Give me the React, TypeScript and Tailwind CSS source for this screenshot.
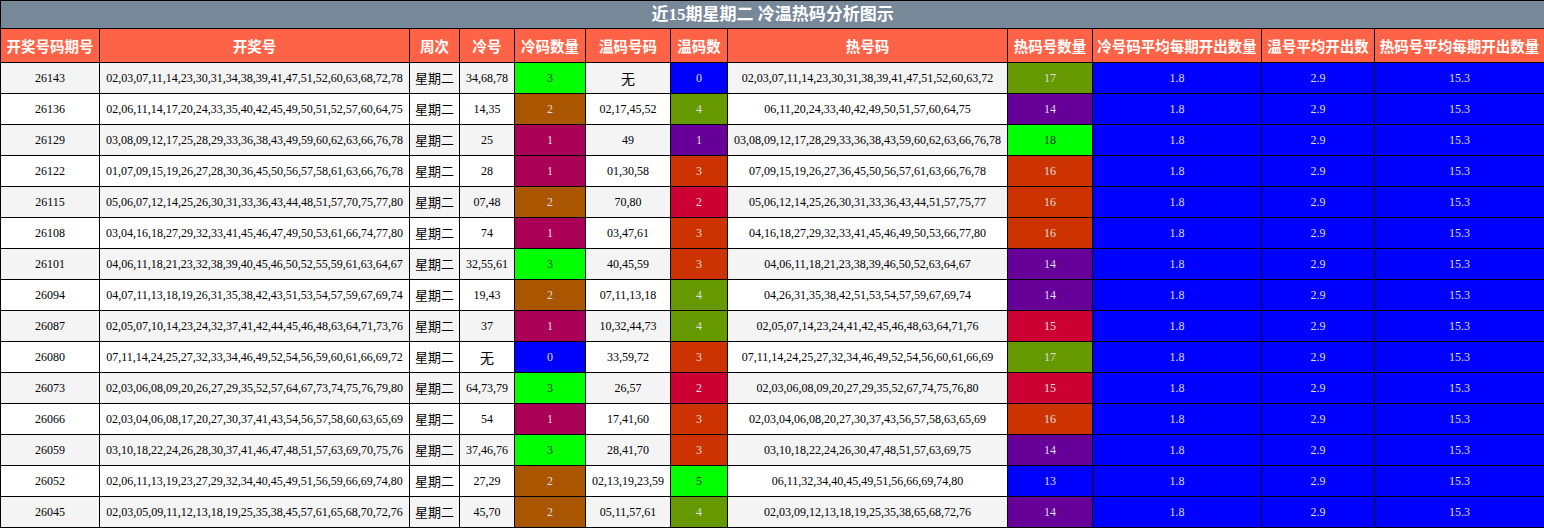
const rows: [string, string, string, number, string, number, string, number][] = [
  ["26143", "02,03,07,11,14,23,30,31,34,38,39,41,47,51,52,60,63,68,72,78", "34,68,78", 3, "无", 0, "02,03,07,11,14,23,30,31,38,39,41,47,51,52,60,63,72", 17],
  ["26136", "02,06,11,14,17,20,24,33,35,40,42,45,49,50,51,52,57,60,64,75", "14,35", 2, "02,17,45,52", 4, "06,11,20,24,33,40,42,49,50,51,57,60,64,75", 14],
  ["26129", "03,08,09,12,17,25,28,29,33,36,38,43,49,59,60,62,63,66,76,78", "25", 1, "49", 1, "03,08,09,12,17,28,29,33,36,38,43,59,60,62,63,66,76,78", 18],
  ["26122", "01,07,09,15,19,26,27,28,30,36,45,50,56,57,58,61,63,66,76,78", "28", 1, "01,30,58", 3, "07,09,15,19,26,27,36,45,50,56,57,61,63,66,76,78", 16],
  ["26115", "05,06,07,12,14,25,26,30,31,33,36,43,44,48,51,57,70,75,77,80", "07,48", 2, "70,80", 2, "05,06,12,14,25,26,30,31,33,36,43,44,51,57,75,77", 16],
  ["26108", "03,04,16,18,27,29,32,33,41,45,46,47,49,50,53,61,66,74,77,80", "74", 1, "03,47,61", 3, "04,16,18,27,29,32,33,41,45,46,49,50,53,66,77,80", 16],
  ["26101", "04,06,11,18,21,23,32,38,39,40,45,46,50,52,55,59,61,63,64,67", "32,55,61", 3, "40,45,59", 3, "04,06,11,18,21,23,38,39,46,50,52,63,64,67", 14],
  ["26094", "04,07,11,13,18,19,26,31,35,38,42,43,51,53,54,57,59,67,69,74", "19,43", 2, "07,11,13,18", 4, "04,26,31,35,38,42,51,53,54,57,59,67,69,74", 14],
  ["26087", "02,05,07,10,14,23,24,32,37,41,42,44,45,46,48,63,64,71,73,76", "37", 1, "10,32,44,73", 4, "02,05,07,14,23,24,41,42,45,46,48,63,64,71,76", 15],
  ["26080", "07,11,14,24,25,27,32,33,34,46,49,52,54,56,59,60,61,66,69,72", "无", 0, "33,59,72", 3, "07,11,14,24,25,27,32,34,46,49,52,54,56,60,61,66,69", 17],
  ["26073", "02,03,06,08,09,20,26,27,29,35,52,57,64,67,73,74,75,76,79,80", "64,73,79", 3, "26,57", 2, "02,03,06,08,09,20,27,29,35,52,67,74,75,76,80", 15],
  ["26066", "02,03,04,06,08,17,20,27,30,37,41,43,54,56,57,58,60,63,65,69", "54", 1, "17,41,60", 3, "02,03,04,06,08,20,27,30,37,43,56,57,58,63,65,69", 16],
  ["26059", "03,10,18,22,24,26,28,30,37,41,46,47,48,51,57,63,69,70,75,76", "37,46,76", 3, "28,41,70", 3, "03,10,18,22,24,26,30,47,48,51,57,63,69,75", 14],
  ["26052", "02,06,11,13,19,23,27,29,32,34,40,45,49,51,56,59,66,69,74,80", "27,29", 2, "02,13,19,23,59", 5, "06,11,32,34,40,45,49,51,56,66,69,74,80", 13],
  ["26045", "02,03,05,09,11,12,13,18,19,25,35,38,45,57,61,65,68,70,72,76", "45,70", 2, "05,11,57,61", 4, "02,03,09,12,13,18,19,25,35,38,65,68,72,76", 14],
]

const coldColor: Record<number, string> = {
  3: "bg-[#00ff00] text-[#333]",
  2: "bg-[#aa5500] text-[#ddd]",
  1: "bg-[#aa0055] text-[#ddd]",
  0: "bg-[#0000ff] text-[#ddd]",
}
const warmColor: Record<number, string> = {
  0: "bg-[#0000ff] text-[#ddd]",
  1: "bg-[#660099] text-[#ddd]",
  2: "bg-[#cc0033] text-[#ddd]",
  3: "bg-[#cc3300] text-[#ddd]",
  4: "bg-[#669900] text-[#ddd]",
  5: "bg-[#00ff00] text-[#333]",
}
const hotColor: Record<number, string> = {
  13: "bg-[#0000ff] text-[#ddd]",
  14: "bg-[#660099] text-[#ddd]",
  15: "bg-[#cc0033] text-[#ddd]",
  16: "bg-[#cc3300] text-[#ddd]",
  17: "bg-[#669900] text-[#ddd]",
  18: "bg-[#00ff00] text-[#333]",
}

const headers = ["开奖号码期号", "开奖号", "周次", "冷号", "冷码数量", "温码号码", "温码数", "热号码", "热码号数量", "冷号码平均每期开出数量", "温号平均开出数", "热码号平均每期开出数量"]
const widths = [99, 310, 50, 55, 71, 85, 57, 280, 85, 169, 113, 170]

const td = "border border-black text-center px-0"
const cjk = "font-[family-name:Noto_Sans_CJK_SC,sans-serif]"

export default function App() {
  return (
    <div className="w-[1544px] h-[528px] overflow-hidden bg-white">
      <table className="w-[1544px] table-fixed border-collapse text-[12px] font-[family-name:Liberation_Serif,Noto_Sans_CJK_SC,serif] text-black">
        <colgroup>
          {widths.map((w, i) => (
            <col key={i} style={{ width: w }} />
          ))}
        </colgroup>
        <thead>
          <tr className="h-[28px]">
            <th colSpan={12} className="border border-black bg-[#778899] text-white text-[17px] font-bold">
              近15期星期二 冷温热码分析图示
            </th>
          </tr>
          <tr className="h-[34px]">
            {headers.map((h) => (
              <th key={h} className={`border border-black bg-[#ff6347] text-white text-[14.5px] font-bold whitespace-nowrap ${cjk}`}>
                {h}
              </th>
            ))}
          </tr>
        </thead>
        <tbody>
          {rows.map((r, i) => (
            <tr key={r[0]} className={`h-[31px] ${i % 2 === 0 ? "bg-[#f4f4f4]" : "bg-white"}`}>
              <td className={td}>{r[0]}</td>
              <td className={`${td} whitespace-nowrap`}>{r[1]}</td>
              <td className={`${td} text-[13px] ${cjk}`}>星期二</td>
              <td className={`${td} whitespace-nowrap ${r[2] === "无" ? `text-[14px] ${cjk}` : ""}`}>{r[2]}</td>
              <td className={`${td} ${coldColor[r[3]]}`}>{r[3]}</td>
              <td className={`${td} whitespace-nowrap ${r[4] === "无" ? `text-[14px] ${cjk}` : ""}`}>{r[4]}</td>
              <td className={`${td} ${warmColor[r[5]]}`}>{r[5]}</td>
              <td className={`${td} whitespace-nowrap`}>{r[6]}</td>
              <td className={`${td} ${hotColor[r[7]]}`}>{r[7]}</td>
              <td className={`${td} bg-[#0000ff] text-[#ddd]`}>1.8</td>
              <td className={`${td} bg-[#0000ff] text-[#ddd]`}>2.9</td>
              <td className={`${td} bg-[#0000ff] text-[#ddd]`}>15.3</td>
            </tr>
          ))}
        </tbody>
      </table>
    </div>
  )
}
